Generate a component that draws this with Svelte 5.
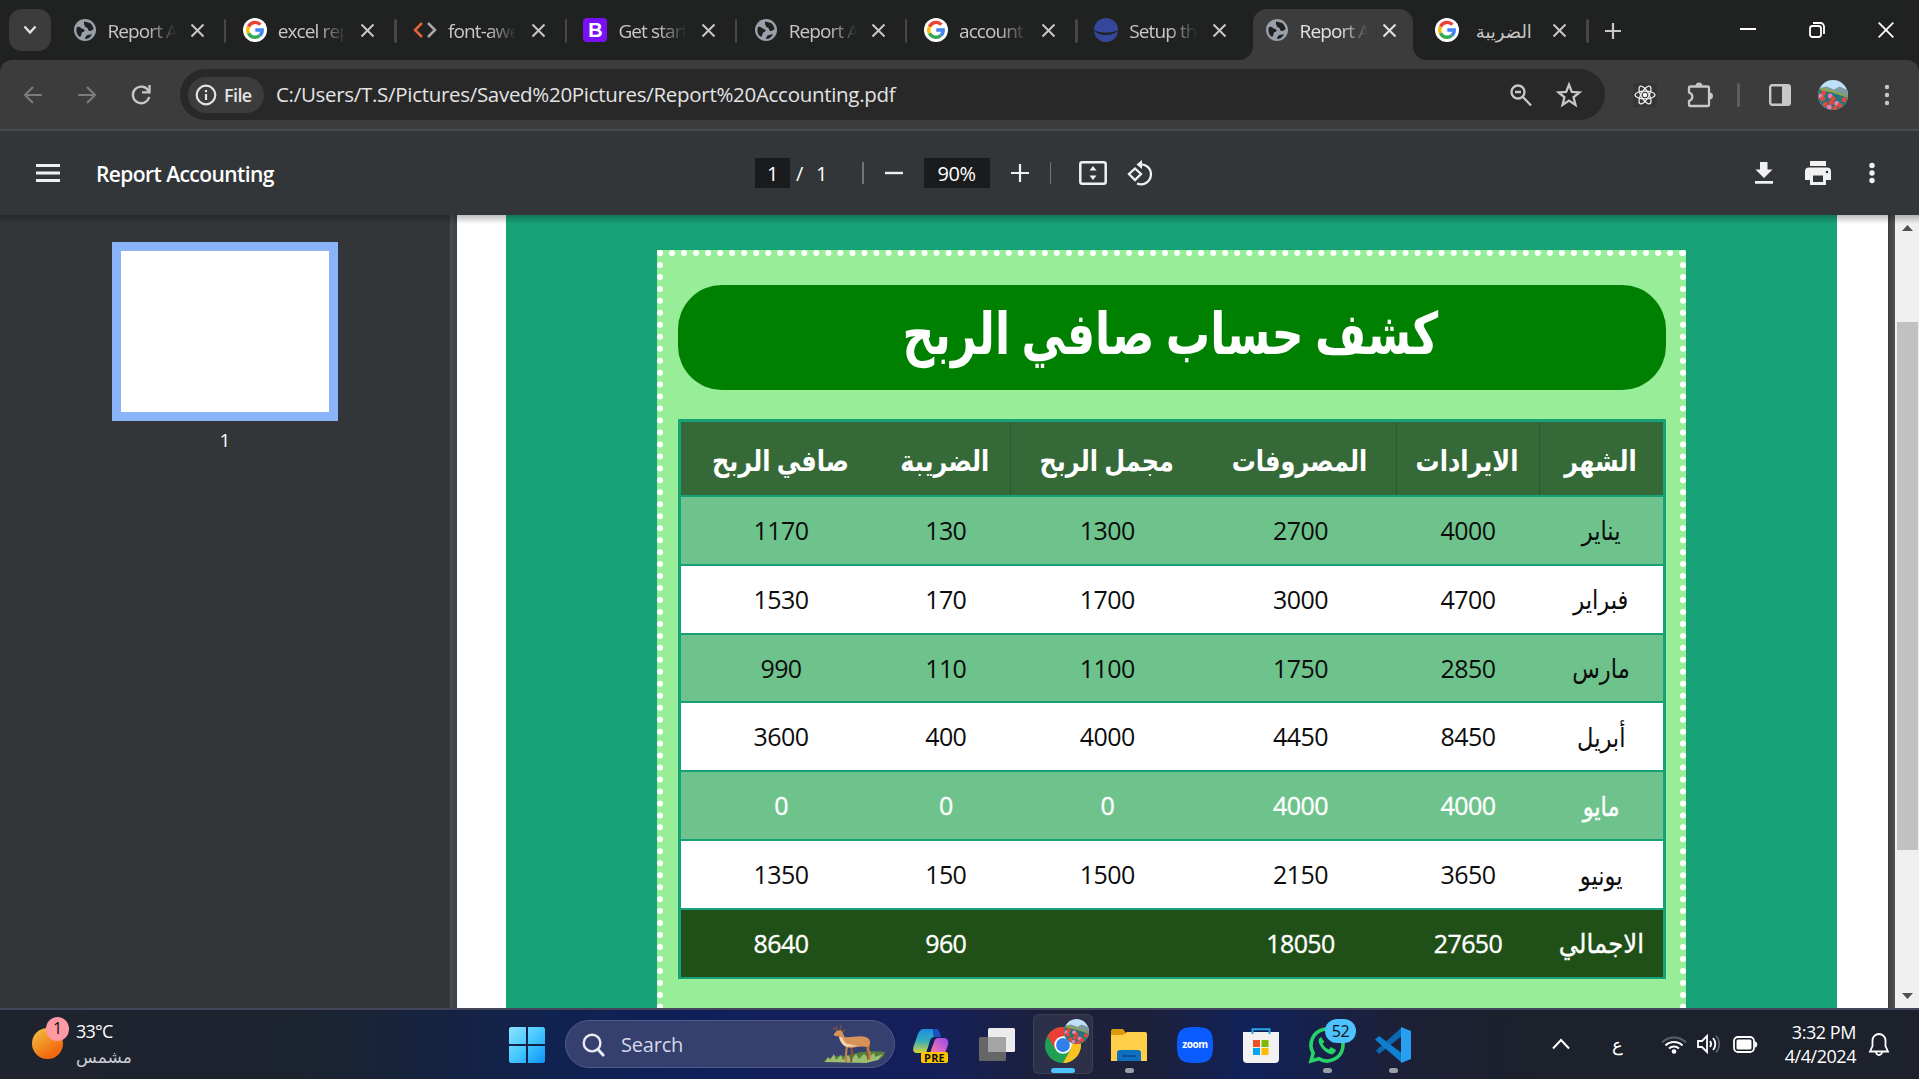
<script>
  const tabs = [
    { icon: 'globe', title: 'Report A' },
    { icon: 'google', title: 'excel rep' },
    { icon: 'code', title: 'font-awe' },
    { icon: 'boot', title: 'Get start' },
    { icon: 'globe', title: 'Report A' },
    { icon: 'google', title: 'account' },
    { icon: 'ball', title: 'Setup th' },
    { icon: 'globe', title: 'Report A', active: true },
    { icon: 'google', title: 'الضريبة', rtl: true }
  ];
  const heads = ['صافي الربح', 'الضريبة', 'مجمل الربح', 'المصروفات', 'الايرادات', 'الشهر'];
  const rows = [
    ['1170', '130', '1300', '2700', '4000', 'يناير'],
    ['1530', '170', '1700', '3000', '4700', 'فبراير'],
    ['990', '110', '1100', '1750', '2850', 'مارس'],
    ['3600', '400', '4000', '4450', '8450', 'أبريل'],
    ['0', '0', '0', '4000', '4000', 'مايو'],
    ['1350', '150', '1500', '2150', '3650', 'يونيو'],
    ['8640', '960', '', '18050', '27650', 'الاجمالي']
  ];
  const poppies = [[3,17],[6,14],[5,20],[13,17],[16,20],[14,24],[20,25],[23,27],[8,26],[12,29],[18,30],[28,21]];
</script>

{#snippet globe()}
  <svg viewBox="0 0 24 24" width="24" height="24"><circle cx="12" cy="12" r="11" fill="#9aa0a9"/><path d="M4 9c3-1 4 2 6 2s2 3 0 3-1 4-3 5C4 17 2.500 13 4 9zM11 3.500c2 0 3 1 6 1.500 2 1.500 3.500 4 3.500 6.500-1.500 0-2 2-4 1.500-2-.5-1-3-3-3.500-2.500-.5-1-2-2.500-3zM13 18c2-2 4-1 6-2-1 3-4 5-7 5 0-1 .5-2 1-3z" fill="#202221"/></svg>
{/snippet}

{#snippet google()}
  <svg viewBox="0 0 24 24" width="24" height="24"><circle cx="12" cy="12" r="12" fill="#fff"/><g fill="none" stroke-width="3.400"><path d="M17.400 6.600A7.300 7.300 0 0 0 5.500 8.700" stroke="#ea4335"/><path d="M5.500 8.700a7.300 7.300 0 0 0 0 6.600" stroke="#fbbc05"/><path d="M5.500 15.300a7.300 7.300 0 0 0 11.300 2.200" stroke="#34a853"/><path d="M16.800 17.500A7 7 0 0 0 19.200 12H12.300" stroke="#4285f4"/></g></svg>
{/snippet}

{#snippet avatar(size)}
  <svg class="avatar" viewBox="0 0 32 32" width={size} height={size}><rect width="32" height="32" fill="#bfe0f8"/><path d="M0 9l9-2 8 3 6-3 9 4v20H0z" fill="#7d9aa2"/><path d="M0 9l12 2 20 6v15H0z" fill="#28747b"/><path d="M3 8l12 3 17 6v2L14 13 2 11z" fill="#8fa64e"/>{#each poppies as [x, y], i}<circle cx={x} cy={y} r="2.600" fill={i % 3 === 0 ? '#ef7fae' : '#ee453b'}/>{/each}</svg>
{/snippet}

{#snippet close()}
  <svg viewBox="0 0 13 13" width="13" height="13" stroke="currentColor" stroke-width="2"><path d="M.5.5l12 12M12.500.5l-12 12"/></svg>
{/snippet}

<div class="screen">
  <header class="tabstrip">
    <div class="searchtabs"><svg viewBox="0 0 14 10" width="14" height="10"><path d="M1.500 1.500L7 7.500l5.500-6" fill="none" stroke="#e3e3e3" stroke-width="2.300"/></svg></div>
    <div class="tabs">
      {#each tabs as t, i}
        <div class="tab" class:active={t.active} class:nosep={i === 6 || i === 7}>
          {#if t.active}<svg class="shape" viewBox="0 0 188 51" width="188" height="51"><path d="M0 51A14 14 0 0 0 14 37V14A14 14 0 0 1 28 0H160A14 14 0 0 1 174 14V37A14 14 0 0 0 188 51z" fill="#3c3c3c"/></svg>{/if}
          <span class="fav">
            {#if t.icon === 'globe'}{@render globe()}
            {:else if t.icon === 'google'}{@render google()}
            {:else if t.icon === 'code'}<svg viewBox="0 0 24 24" width="24" height="24" fill="none" stroke-width="2.500"><path d="M9 5L2 12l7 7" stroke="#e2663a"/><path d="M15 5l7 7-7 7" stroke="#a9a9a9"/></svg>
            {:else if t.icon === 'boot'}<span class="boot">B</span>
            {:else}<svg viewBox="0 0 24 24" width="24" height="24"><circle cx="12" cy="12" r="12" fill="#34479a"/><path d="M-1 12Q12 17.500 25 12Q20 17 12 17T-1 12z" fill="#202221"/></svg>{/if}
          </span>
          <span class="tabtitle" class:rtl={t.rtl}><span>{t.title}</span></span>
          <span class="x">{@render close()}</span>
        </div>
      {/each}
    </div>
    <svg class="newtab" viewBox="0 0 16 16" width="16" height="16" stroke="#c7c7c7" stroke-width="2.200"><path d="M8 0v16M0 8h16"/></svg>
    <div class="winctl">
      <svg viewBox="0 0 16 16" width="16" height="16" stroke="#fff" stroke-width="2"><path d="M0 7h16"/></svg>
      <svg viewBox="0 0 16 16" width="16" height="16" stroke="#fff" stroke-width="1.800" fill="none"><rect x="1" y="4" width="11" height="11" rx="2.500"/><path d="M4 1h7.500A3.500 3.500 0 0 1 15 4.500V12"/></svg>
      <svg viewBox="0 0 16 16" width="16" height="16" stroke="#fff" stroke-width="1.800"><path d="M.7.7l14.600 14.600M15.300.7L.7 15.300"/></svg>
    </div>
  </header>

  <nav class="toolbar">
    <div class="navs">
      <svg viewBox="0 0 20 20" width="20" height="20" fill="none" stroke="#7b7b7b" stroke-width="2.200"><path d="M19 10H2M10 2l-8 8 8 8"/></svg>
      <svg viewBox="0 0 20 20" width="20" height="20" fill="none" stroke="#7b7b7b" stroke-width="2.200"><path d="M1 10h17M10 2l8 8-8 8"/></svg>
      <svg viewBox="0 0 20 20" width="20" height="20" fill="none" stroke="#c7c7c7" stroke-width="2.300"><path d="M17.500 6A8.300 8.300 0 1 0 18.200 12"/><path d="M18.500 0v7.400H11" /></svg>
    </div>
    <div class="omnibox">
      <div class="chip"><svg viewBox="0 0 22 22" width="22" height="22" fill="none" stroke="#e3e3e3" stroke-width="2.200"><circle cx="11" cy="11" r="9.300"/><path d="M11 10v6M11 6v2.300"/></svg><span>File</span></div>
      <span class="url">C:/Users/T.S/Pictures/Saved%20Pictures/Report%20Accounting.pdf</span>
      <svg viewBox="0 0 22 22" width="22" height="22" fill="none" stroke="#c7c7c7" stroke-width="2.300"><circle cx="8" cy="8" r="6.500"/><path d="M12.500 12.500l8.500 9M5 8h6"/></svg>
      <svg class="star" viewBox="0 0 24 24" width="26" height="26" fill="none" stroke="#c7c7c7" stroke-width="2.100"><path d="M12 2.500l2.600 6.700 7 .4-5.400 4.500 1.800 7L12 17.200 6 21.100l1.800-7L2.400 9.600l7-.4z"/></svg>
    </div>
    <svg class="react" viewBox="0 0 24 24" width="24" height="24" fill="none" stroke="#f0f0f0" stroke-width="1.300"><rect width="24" height="24" fill="#353535" stroke="none"/><ellipse cx="12" cy="12" rx="10" ry="3.900"/><ellipse cx="12" cy="12" rx="10" ry="3.900" transform="rotate(60 12 12)"/><ellipse cx="12" cy="12" rx="10" ry="3.900" transform="rotate(120 12 12)"/><circle cx="12" cy="12" r="1.600" fill="#fff"/></svg>
    <svg class="ext" viewBox="0 0 26 26" width="26" height="26" fill="none" stroke="#c7c7c7" stroke-width="2.300"><path d="M3.500 4.500H20.500a1.500 1.500 0 0 1 1.500 1.500V22.500a1.500 1.500 0 0 1-1.500 1.500H3.500A1.500 1.500 0 0 1 2 22.500V19c4.500-1.500 4.500-7 0-8.500V6A1.500 1.500 0 0 1 3.500 4.500z"/><path d="M8.500 4a3.500 3.500 0 0 1 7 0zM22.500 10.500a3.500 3.500 0 0 1 0 7z" fill="#c7c7c7" stroke="none"/></svg>
    <i class="vline"></i>
    <svg class="side" viewBox="0 0 22 22" width="22" height="22"><rect x="1.200" y="1.200" width="19.600" height="19.600" rx="2" fill="none" stroke="#c7c7c7" stroke-width="2.400"/><path d="M13 1h8v20h-8z" fill="#c7c7c7"/></svg>
    <span class="face">{@render avatar(30)}</span>
    <svg class="kebab" viewBox="0 0 6 22" width="6" height="22" fill="#c7c7c7"><circle cx="3" cy="3" r="2.200"/><circle cx="3" cy="11" r="2.200"/><circle cx="3" cy="19" r="2.200"/></svg>
  </nav>

  <div class="pdfbar">
    <div class="pdfleft">
      <svg viewBox="0 0 24 18" width="24" height="18" fill="#f1f1f1"><path d="M0 0h24v3H0zM0 7.500h24v3H0zM0 15h24v3H0z"/></svg>
      <span class="pdftitle">Report Accounting</span>
    </div>
    <div class="pdfmid">
      <span class="box pg">1</span><span class="slash">/</span><span class="total">1</span>
      <i class="bar"></i>
      <svg class="minus" viewBox="0 0 18 18" width="18" height="18" stroke="#f1f1f1" stroke-width="2.400"><path d="M0 9h18"/></svg>
      <span class="box zoom">90%</span>
      <svg class="plus" viewBox="0 0 18 18" width="18" height="18" stroke="#f1f1f1" stroke-width="2.200"><path d="M0 9h18M9 0v18"/></svg>
      <i class="bar b2"></i>
      <svg class="fit" viewBox="0 0 28 24" width="28" height="24"><rect x="1.300" y="1.300" width="25.400" height="21.400" rx="2" fill="none" stroke="#f1f1f1" stroke-width="2.500"/><path d="M10.500 9.500L14 5l3.500 4.500zM10.500 14.500L14 19l3.500-4.500z" fill="#f1f1f1"/></svg>
      <svg class="rot" viewBox="0 0 26 26" width="26" height="26" fill="none" stroke="#f1f1f1" stroke-width="2.300"><path d="M8 8.500L14 14l-6 6-6-6z"/><path d="M12 4.500a10 10 0 1 1-2 19"/><path d="M15 0v9l-5.500-4.500z" fill="#f1f1f1" stroke="none"/></svg>
    </div>
    <div class="pdfright">
      <svg viewBox="0 0 18 22" width="18" height="22" fill="#f1f1f1"><path d="M5 0h7.500v7.500H17.500L9 16 .5 7.500H5zM0 19h18v2.700H0z"/></svg>
      <svg viewBox="0 0 26 24" width="26" height="24"><path d="M5 0h16v5H5zM4 6.500h18a4 4 0 0 1 4 4V19h-5v5H5v-5H0v-8.500a4 4 0 0 1 4-4z" fill="#f1f1f1"/><path d="M8 14.500h10V21H8z" fill="#323639"/><circle cx="22" cy="11" r="1.300" fill="#323639"/></svg>
      <svg viewBox="0 0 6 22" width="6" height="22" fill="#f1f1f1"><circle cx="3" cy="3.500" r="2.700"/><circle cx="3" cy="11" r="2.700"/><circle cx="3" cy="18.500" r="2.700"/></svg>
    </div>
  </div>

  <main class="viewer">
    <aside><div class="thumb"></div><span>1</span></aside>
    <div class="splitter"></div>
    <div class="paper">
      <div class="green">
        <section class="sheet">
          <h1><span>كشف حساب صافي الربح</span></h1>
          <div class="table">
            <div class="tr th">{#each heads as h}<div><span>{h}</span></div>{/each}</div>
            {#each rows as r, i}
              <div class="tr" class:odd={i % 2 === 0} class:may={i === 4} class:sum={i === 6}>{#each r as c, j}<div class:ar={j === 5}><span>{c}</span></div>{/each}</div>
            {/each}
          </div>
        </section>
      </div>
    </div>
    <div class="edge"></div>
    <div class="scroll">
      <svg viewBox="0 0 11 6" width="11" height="6" fill="#505050"><path d="M0 6L5.500 0 11 6z"/></svg>
      <div class="grip"></div>
      <svg viewBox="0 0 11 6" width="11" height="6" fill="#505050"><path d="M0 0l5.500 6L11 0z"/></svg>
    </div>
    <div class="shade"></div>
  </main>

  <footer class="taskbar">
    <div class="weather">
      <div class="sun"><b>1</b></div>
      <div class="temp"><span>33°C</span><span class="cond">مشمس</span></div>
    </div>
    <div class="apps">
      <svg class="start" viewBox="0 0 36 36" width="36" height="36"><defs><linearGradient id="win" x1="0" y1="0" x2="1" y2="1"><stop offset="0" stop-color="#8fe2ff"/><stop offset=".5" stop-color="#46c8ff"/><stop offset="1" stop-color="#0c93fb"/></linearGradient></defs><path d="M1.500 0H17v17H0V1.500zM19 0h15.500L36 1.500V17H19zM0 19h17v17H1.500L0 34.500zM19 19h17v15.500L34.500 36H19z" fill="url(#win)"/></svg>
      <div class="search">
        <svg viewBox="0 0 24 24" width="23" height="23" fill="none" stroke="#e8eaf4" stroke-width="2.500"><circle cx="10.500" cy="10.500" r="8.700"/><path d="M16.500 17l5.500 6" stroke-width="3.200" stroke-linecap="round"/></svg>
        <span>Search</span>
        <svg class="deer" viewBox="0 0 64 38" width="64" height="38">
          <path d="M0 37c5-5 14-7 24-6 8-4 26-6 38-4-1 6-5 9-22 10z" fill="#55803c"/>
          <path d="M2 37l3-5 2 3 4-6 2 6 5-5 2 5 5-5 3 5 5-6 3 5 5-5 4 4 6-5 1 4 8-3-5 6-12 3z" fill="#9cbf72"/>
          <path d="M28 20l1 8-1 9M43 18l2 9 0 8" fill="none" stroke="#93532d" stroke-width="2"/>
          <path d="M24 20l-1 9 0 8M46 17l-1 7 2 5-1 6" fill="none" stroke="#c17e48" stroke-width="2.200"/>
          <path d="M10.500 9.500l3-3.500 4-1 2 2 2 5c6 1 14-2 21 0 3.500 1 5 3.500 4.500 7l-3 3c-3-1-7-.5-11 0-4 1.500-8 1-11-1-3-2-4-5-6-9.500l-4-.5z" fill="#d79357"/>
          <path d="M16 12c1 5 4 9 8 10l11-1-7-1.500c-6-.5-7-3-9-7.500z" fill="#f3d3ad"/>
          <path d="M14 6l-1-5M17 5l1-5M19 7l3-2.500M12 5l-2-2" fill="none" stroke="#8a5632" stroke-width="1.200"/>
        </svg>
      </div>
      <div class="app"><svg viewBox="0 0 36 42" width="36" height="42"><defs><linearGradient id="cpa" x1="0" y1="0" x2="0" y2="1"><stop offset="0" stop-color="#1f8ee8"/><stop offset=".5" stop-color="#35aeb8"/><stop offset="1" stop-color="#d9d43a"/></linearGradient><linearGradient id="cpb" x1="1" y1="0" x2="0" y2="1"><stop offset="0" stop-color="#9049ef"/><stop offset=".6" stop-color="#df6bc0"/><stop offset="1" stop-color="#fb9665"/></linearGradient></defs><path d="M11 2h11c4 0 4 3 6 8h-7c-3 0-4 3-5 7l-3 9H4c-5 0-4-5-3-8L5 7c1-3 3-5 6-5z" fill="url(#cpa)"/><path d="M19 2h3c4 0 4 3 6 8h-7c-2-4 0-6-2-8z" fill="#1c4fc0"/><path d="M25 11h6c4 0 5 4 4 7l-4 11H16l5-14c1-3 2-4 4-4z" fill="url(#cpb)"/><rect x="8" y="25" width="27" height="11" rx="2" fill="#ffc400"/></svg><em>PRE</em></div>
      <div class="app"><svg viewBox="0 0 36 42" width="36" height="42"><rect y="10" width="27" height="24" rx="1.500" fill="#666"/><rect x="9" y="1" width="27" height="24" rx="1.500" fill="#ececec"/><path d="M9 10h18v15H9z" fill="#a5a5a5"/></svg></div>
      <div class="app on"><svg viewBox="0 0 36 42" width="36" height="42"><circle cx="18" cy="18" r="18" fill="#1fa052"/><path d="M18 18L2.400 9A18 18 0 0 1 33.600 9z" fill="#ea3f34"/><path d="M18 9.500h15.800A18 18 0 0 1 18 36l8-14z" fill="#fcc31e"/><path d="M2.400 9l8 13.500L18 9.500z" fill="#ea3f34"/><circle cx="18" cy="18" r="8.700" fill="#fff"/><circle cx="18" cy="18" r="6.900" fill="#2f7fed"/></svg><span class="mini">{@render avatar(25)}</span><i class="ind wide"></i></div>
      <div class="app"><svg viewBox="0 0 36 42" width="36" height="42"><path d="M0 4a2 2 0 0 1 2-2h10l3 4v6H0z" fill="#dc9a08"/><path d="M0 8h12l4-3h18a2 2 0 0 1 2 2v27H0z" fill="#ffcf4a"/><path d="M6 34V26a3 3 0 0 1 3-3h18a3 3 0 0 1 3 3v8z" fill="#0f6fc0"/><path d="M11 29h14" stroke="#0a4a87" stroke-width="1.500"/></svg><i class="ind"></i></div>
      <div class="app"><svg viewBox="0 0 36 42" width="36" height="42"><path d="M18 0c15 0 18 4 18 18s-3 18-18 18S0 32 0 18 3 0 18 0z" fill="#0b5cff"/></svg><em class="zoomtx">zoom</em></div>
      <div class="app"><svg viewBox="0 0 36 42" width="36" height="42"><path d="M0 5h36v27a4 4 0 0 1-4 4H4a4 4 0 0 1-4-4z" fill="#f2f2f2"/><path d="M9.500 7V2.200h17V7" fill="none" stroke="#23a6ea" stroke-width="2"/><path d="M10 13h7v7h-7z" fill="#f25022"/><path d="M18.500 13h7v7h-7z" fill="#7fba00"/><path d="M10 21h7v7h-7z" fill="#00a4ef"/><path d="M18.500 21h7v7h-7z" fill="#ffb900"/></svg></div>
      <div class="app"><svg viewBox="0 0 36 42" width="36" height="42"><path d="M2 34l2.200-8A16 16 0 1 1 10 31.800z" fill="none" stroke="#26d366" stroke-width="3.600"/><path d="M12 10c-2 1-3 3-2 6 2 5 6 9 11 11 3 1 5-1 6-4l-5-3-2 2.500c-3-1-5-3-6.500-6L15.500 15z" fill="#26d366"/></svg><span class="count">52</span><i class="ind"></i></div>
      <div class="app"><svg viewBox="0 0 36 42" width="36" height="42"><path d="M26 1L1 23.500 4 27 28 8z" fill="#0a69b3"/><path d="M4 9L0 12.500 26 35l2-8z" fill="#0f7fd0"/><path d="M26 0l10 4v28l-10 4z" fill="#27a0f2"/></svg><i class="ind"></i></div>
    </div>
    <div class="tray">
      <svg class="up" viewBox="0 0 16 11" width="16" height="11" fill="none" stroke="#fff" stroke-width="2"><path d="M0 9.500l8-8.500 8 8.500"/></svg>
      <span class="lang">ع</span>
      <svg class="wifi" viewBox="0 0 26 20" width="26" height="20" fill="none" stroke-width="2"><path d="M1 8.500a17 17 0 0 1 24 0" stroke="#5b5f66"/><g stroke="#fff"><path d="M4.500 11.500a12.300 12.300 0 0 1 17 0M8 14.500a7.500 7.500 0 0 1 10 0"/></g><circle cx="13" cy="17.500" r="2.300" fill="#fff"/></svg>
      <svg class="vol" viewBox="0 0 26 20" width="26" height="20" fill="none" stroke="#fff" stroke-width="1.800"><path d="M1 7h4l5-5v16l-5-5H1z"/><path d="M13 7a5 5 0 0 1 0 6M16 4a9 9 0 0 1 0 12"/><path d="M19 1.500a13 13 0 0 1 0 17" stroke="#5b5f66"/></svg>
      <svg class="bat" viewBox="0 0 25 17" width="25" height="17"><rect x="1" y="1" width="20" height="15" rx="4" fill="none" stroke="#fff" stroke-width="1.800"/><rect x="3.500" y="3.500" width="15" height="10" rx="1.500" fill="#fff"/><path d="M22 5.500c3 0 3 6 0 6z" fill="#fff"/></svg>
      <div class="clock"><span>3:32 PM</span><span>4/4/2024</span></div>
      <svg class="bell" viewBox="0 0 20 23" width="20" height="23" fill="none" stroke="#fff" stroke-width="1.800"><path d="M10 1a6.500 6.500 0 0 0-6.500 6.500V13L1 18.500h18L16.500 13V7.500A6.500 6.500 0 0 0 10 1z"/><path d="M7 19c.5 4 5.500 4 6 0"/></svg>
    </div>
  </footer>
</div>

<style>
  :global(body) { margin: 0; overflow: hidden; }
  .screen { width: 1919px; height: 1079px; display: flex; flex-direction: column; overflow: hidden; background: #202221; font-family: 'Open Sans', 'Noto Sans', 'DejaVu Sans', sans-serif; box-sizing: border-box; }
  .screen * { box-sizing: border-box; }
  svg { display: block; flex: none; overflow: visible; }
  span { white-space: nowrap; }

  .tabstrip { height: 60px; flex: none; display: flex; padding-left: 9px; background: #202221; }
  .searchtabs { width: 42px; height: 42px; margin-top: 9px; border-radius: 13px; background: #3c3c3c; display: grid; place-items: center; }
  .tabs { display: flex; margin-left: 5px; padding-top: 9px; }
  .tab { width: 170.300px; height: 51px; padding: 9px 0 0 16.500px; display: flex; position: relative; color: #c7c7c7; }
  .tab::after { content: ''; width: 3px; height: 24px; border-radius: 2px; background: #464746; margin: 1px 0 0 20px; }
  .tab.nosep::after { visibility: hidden; }
  .fav { width: 24px; height: 24px; flex: none; }
  .boot { display: block; width: 24px; height: 24px; border-radius: 4px; background: #7a10f8; color: #fff; font: bold 20px/24px 'Liberation Sans', sans-serif; text-align: center; }
  .tabtitle { width: 72px; margin: 0 11.500px 0 11px; height: 30px; font-size: 19px; line-height: 27px; letter-spacing: -.9px; flex: none; -webkit-mask-image: linear-gradient(90deg, #000 55%, transparent 95%); mask-image: linear-gradient(90deg, #000 55%, transparent 95%); }
  .tabtitle.rtl { text-align: right; letter-spacing: 0; padding-right: 10px; font-size: 18px; -webkit-mask-image: none; mask-image: none; }
  .x { margin-top: 6px; flex: none; }
  .active { color: #e3e3e3; }
  .shape { position: absolute; left: -9px; top: 0; }
  .active > span { position: relative; }
  .newtab { margin: 23px 0 0 16px; }
  .winctl { margin: 22px 25px 0 auto; display: flex; gap: 53px; }

  .toolbar { height: 71px; flex: none; background: #3c3c3c; border-bottom: 2px solid #4a4b4b; border-radius: 12px 12px 0 0; display: flex; align-items: center; padding-left: 23px; }
  .navs { display: flex; gap: 34px; width: 157px; }
  .omnibox { width: 1425px; height: 51px; border-radius: 26px; background: #282828; display: flex; align-items: center; padding: 0 23px 0 8px; }
  .chip { width: 76px; height: 36px; border-radius: 18px; background: #3c3c3c; display: flex; align-items: center; gap: 7px; padding-left: 7px; color: #e3e3e3; font-size: 18px; font-weight: 600; letter-spacing: -.6px; }
  .url { flex: 1; margin-left: 12px; color: #e3e3e3; font-size: 20.500px; line-height: 28px; padding-bottom: 1px; letter-spacing: -.3px; }
  .star { margin-left: 24px; }
  .react { margin-left: 28px; }
  .ext { margin-left: 30px; }
  .vline { width: 3px; height: 24px; margin-left: 24px; background: #5e5e5e; border-radius: 2px; }
  .side { margin-left: 29px; }
  .face { margin-left: 27px; }
  .avatar { border-radius: 50%; overflow: hidden; }
  .kebab { margin-left: 36px; }

  .pdfbar { height: 84px; flex: none; background: #323639; display: flex; align-items: center; color: #fff; position: relative; z-index: 2; }
  .pdfleft { width: 755px; display: flex; align-items: center; padding-left: 36px; gap: 36px; }
  .pdftitle { font-size: 21px; font-weight: 600; letter-spacing: -.58px; line-height: 28px; padding-top: 1px; }
  .pdfmid { display: flex; align-items: center; font-size: 20px; letter-spacing: -.5px; }
  .box { height: 30px; background: #191b1c; text-align: center; line-height: 31px; }
  .pg { width: 35px; }
  .slash { margin-left: 6px; width: 20px; }
  .total { width: 12px; }
  .bar { width: 1.500px; height: 22px; background: #70757a; margin: 0 21px 0 34px; }
  .zoom { width: 66px; margin-left: 21px; }
  .plus { margin-left: 21px; }
  .b2 { margin: 0 28px 0 21px; }
  .rot { margin-left: 20px; }
  .pdfright { margin: 0 44px 0 auto; display: flex; align-items: center; gap: 32px; }
  .pdfright svg:last-child { margin-left: 6px; }

  .viewer { height: 793px; flex: none; display: flex; overflow: hidden; position: relative; }
  .shade { position: absolute; left: 0; top: 0; width: 100%; height: 9px; background: linear-gradient(rgba(0,0,0,.26), transparent); }
  aside { width: 450px; background: #323639; display: flex; flex-direction: column; align-items: center; padding-top: 27px; color: #fff; font-size: 19px; }
  .thumb { width: 226px; height: 179px; background: #fff; border: 9px solid #8ab4f8; margin-bottom: 6px; }
  .splitter { width: 7px; background: linear-gradient(90deg, #4b4e51, #3c4043); }
  .paper { width: 1431px; background: #fff; padding: 0 51px 0 49px; }
  .green { height: 900px; background: #16a177; padding: 35px 151px 0; }
  .sheet { height: 1000px; background: #98ee98; border: 6px dotted #fff; padding: 29px 14px 0 15px; }
  h1 { margin: 0 0 29px; height: 105px; border-radius: 44px; background: green; color: #fff; display: grid; place-items: center; font-size: 50px; line-height: 1; }
  h1 span { transform: translate(-2px, -6px) scale(.883, 1.16); }
  .table { height: 560px; border: 3px solid #16a177; font-size: 25px; letter-spacing: -.6px; color: #0c0c0c; }
  .tr { display: grid; grid-template-columns: 201px 128.500px 194.500px 192px 143px 1fr; height: 68.830px; border-top: 2px solid #16a177; background: #fff; }
  .tr > div { display: grid; place-items: center; }
  .tr span { line-height: 1; transform: translate(-.5px, -.5px); }
  .th { height: 73px; border-top: 0; background: #366938; color: #fff; font-weight: 700; font-size: 24px; letter-spacing: 0; }
  .th span { transform: translate(-1px, 1px) scale(1, 1.2); }
  .th > div:nth-child(2), .th > div:nth-child(4), .th > div:nth-child(5) { border-right: 1px solid #2b5a2c; }
  .ar { font-size: 24px; letter-spacing: 0; }
  .tr .ar span { transform: translateX(-.5px) scale(.94, 1.12); }
  .sum .ar span { transform: translateX(-.5px) scale(1.02, 1.12); }
  .odd { background: #6ec38c; }
  .may { color: #fff; font-weight: 500; }
  .sum { background: #205017; color: #fff; font-weight: 500; }
  .may span, .sum span { -webkit-text-stroke: .35px #fff; }
  .edge { width: 7px; background: linear-gradient(90deg, #3c4043, #4f5356); }
  .scroll { width: 24px; background: #f0f0f0; display: flex; flex-direction: column; align-items: center; padding: 10px 0 9px; justify-content: space-between; }
  .grip { width: 21px; height: 528px; background: #c1c1c1; margin: -53px 0 0; }

  .taskbar { height: 71px; flex: none; border-top: 2px solid #43465a; background: linear-gradient(90deg, #1f232d 0, #1c2430 16%, #102250 29%, #111f5b 38%, #15205a 49%, #1d2038 55%, #1c203b 60%, #11225a 65%, #1d2036 73%, #1c212b 80%); display: flex; color: #fff; position: relative; }
  .weather { width: 510px; display: flex; padding: 8px 0 0 32px; }
  .sun { width: 31px; height: 31px; margin-top: 10px; border-radius: 50%; background: linear-gradient(145deg, #f2c744, #f26a10 75%); position: relative; }
  .sun b { position: absolute; left: 14px; top: -11px; width: 23px; height: 24px; border-radius: 50%; background: #ff99a4; color: #111; font-size: 16px; font-weight: 400; line-height: 23px; text-align: center; }
  .temp { margin-left: 13px; display: flex; flex-direction: column; font-size: 18px; line-height: 27px; letter-spacing: -.8px; }
  .cond { font-size: 17px; line-height: 24px; letter-spacing: 0; color: #c9ccd1; }
  .apps { display: flex; padding-top: 4px; margin-left: -1px; }
  .start { margin-top: 13px; }
  .search { width: 330px; height: 48px; margin: 6px 4px 0 20px; border-radius: 24px; background: #35406f; border: 1.500px solid #515b89; display: flex; align-items: center; padding: 0 7px 0 16px; font-size: 20px; color: #d4d8e8; }
  .search span { margin-left: 16px; flex: 1; letter-spacing: -.2px; }
  .app { width: 60px; height: 60px; margin-right: 6px; padding: 13px 12px 0; position: relative; border-radius: 6px; }
  .app:nth-child(3) { margin-left: 2px; }
  .on { background: rgba(255,255,255,.075); border: 1px solid rgba(255,255,255,.08); padding: 12px 11px 0; }
  .app em { position: absolute; left: 20px; top: 37px; width: 27px; font: 700 11px/13px 'Open Sans', sans-serif; letter-spacing: .2px; text-align: center; color: #111; }
  .app .zoomtx { left: 12px; top: 24px; width: 36px; font-size: 10px; color: #fff; letter-spacing: -.4px; }
  .mini { position: absolute; left: 30px; top: 4px; }
  .ind { position: absolute; left: 26px; bottom: 1px; width: 9px; height: 5px; border-radius: 3px; background: #9b9ea8; }
  .wide { left: 17px; bottom: 0; width: 24px; background: #4cc2ff; }
  .count { position: absolute; left: 28px; top: 5px; width: 31px; height: 24px; border-radius: 12px; background: #4cc2ff; color: #111; font-size: 16px; line-height: 24px; text-align: center; letter-spacing: -.5px; }
  .tray { position: relative; display: flex; align-items: center; margin: -1px 30px 0 auto; }
  .up { margin-right: 43px; }
  .lang { font-size: 18px; width: 10px; }
  .wifi { margin-left: 39px; }
  .vol { margin-left: 10px; }
  .bat { margin-left: 10px; }
  .clock { display: flex; flex-direction: column; align-items: flex-end; font-size: 18px; line-height: 24px; letter-spacing: -.45px; margin: 0 13px 0 0; width: 98px; }
</style>
